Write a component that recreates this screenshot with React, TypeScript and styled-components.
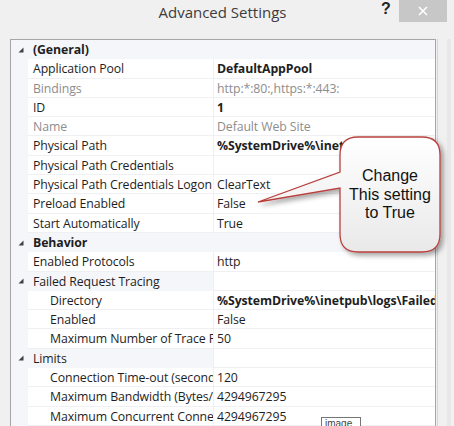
import React from "react";
import styled, { createGlobalStyle } from "styled-components";

const Global = createGlobalStyle`
  html, body { margin: 0; padding: 0; }
  body {
    width: 454px; height: 426px; overflow: hidden;
    background: #f0f0f0;
    font-family: "Open Sans", "Noto Sans", sans-serif;
  }
`;

const Window = styled.div`
  position: relative;
  width: 454px;
  height: 426px;
  overflow: hidden;
  background: #f0f0f0;
  display: flex;
  flex-direction: column;
`;

const TitleBar = styled.div`
  height: 39px;
  flex: none;
  display: flex;
  align-items: flex-start;
`;

const Title = styled.div`
  flex: 1;
  text-align: center;
  padding-top: 2px;
  padding-left: 74px;
  font-size: 15px;
  color: #3c3c3c;
  margin-right: 10px;
`;

const Help = styled.div`
  width: 16px;
  font-family: "Liberation Sans", Arial, sans-serif;
  font-weight: bold;
  font-size: 16px;
  color: #222;
  margin-right: 2px;
`;

const Close = styled.div`
  width: 48px;
  height: 22px;
  margin-right: 7px;
  background: #c7c7c7;
  display: flex;
  align-items: center;
  justify-content: center;
`;

const Body = styled.div`
  flex: 1;
  display: flex;
  padding-left: 10px;
`;

const Grid = styled.div`
  width: 424px;
  border: 1px solid #a6a6a6;
  border-bottom: none;
  background: #f5f6fa;
  display: flex;
  flex-direction: column;
`;

const Side = styled.div`
  flex: 1;
  margin-left: 1px;
  border-left: 1px solid #d6d6d6;
  background: linear-gradient(to right, #f0f0f0 0 9px, #e8e8e8 9px 13px, #f2f2f2 13px);
`;

const RowBox = styled.div`
  height: 19.3px;
  flex: none;
  display: grid;
  grid-template-columns: 17px 185px 1fr;
  font-size: 12.3px;
  letter-spacing: -0.1px;
  line-height: 19px;
  color: #1e1e1e;
`;

const Gutter = styled.div`
  display: flex;
  align-items: center;
  justify-content: flex-end;
  padding-right: 4px;
`;

const NameCell = styled.div<{ $indent?: boolean; $cat?: boolean; $bold?: boolean; $disabled?: boolean }>`
  background: ${(p) => (p.$cat ? "transparent" : "#ffffff")};
  border-bottom: 1px solid ${(p) => (p.$cat ? "transparent" : "#eff0f4")};
  padding-left: ${(p) => (p.$indent ? "22px" : "5px")};
  white-space: nowrap;
  overflow: hidden;
  font-weight: ${(p) => (p.$bold ? 700 : 400)};
  color: ${(p) => (p.$disabled ? "#8d8d8d" : "#1e1e1e")};
  box-sizing: border-box;
`;

const ValueCell = styled.div<{ $cat?: boolean; $bold?: boolean; $disabled?: boolean }>`
  background: ${(p) => (p.$cat ? "transparent" : "#ffffff")};
  border-left: 1px solid ${(p) => (p.$cat ? "transparent" : "#eff0f4")};
  border-bottom: 1px solid ${(p) => (p.$cat ? "transparent" : "#eff0f4")};
  padding-left: 3px;
  white-space: nowrap;
  overflow: hidden;
  font-weight: ${(p) => (p.$bold ? 700 : 400)};
  color: ${(p) => (p.$disabled ? "#8d8d8d" : "#1e1e1e")};
  box-sizing: border-box;
`;

const Expander = () => (
  <svg width="6" height="6" viewBox="0 0 6 6">
    <polygon points="5.5,0.5 5.5,5.5 0.5,5.5" fill="#404040" />
  </svg>
);

type RowProps = {
  name: string;
  value?: string;
  kind?: "cat" | "sub" | "prop" | "child";
  bold?: boolean;
  disabled?: boolean;
  boldName?: boolean;
};

const Row = ({ name, value, kind = "prop", bold, disabled, boldName }: RowProps) => {
  const cat = kind === "cat";
  const sub = kind === "sub";
  return (
    <RowBox>
      <Gutter>{cat || sub ? <Expander /> : null}</Gutter>
      <NameCell $cat={cat || sub} $indent={kind === "child"} $bold={boldName} $disabled={disabled}>
        {name}
      </NameCell>
      <ValueCell $cat={cat} $bold={bold} $disabled={disabled}>
        {value ?? ""}
      </ValueCell>
    </RowBox>
  );
};

const CalloutWrap = styled.div`
  position: absolute;
  left: 250px;
  top: 130px;
  width: 200px;
  height: 135px;
`;

const CalloutText = styled.div`
  position: absolute;
  left: 90px;
  top: 37px;
  width: 100px;
  text-align: center;
  font-family: "Liberation Sans", Arial, sans-serif;
  font-size: 16px;
  line-height: 18.5px;
  color: #111;
`;

const Tooltip = styled.div`
  position: absolute;
  left: 321px;
  top: 417px;
  width: 35px;
  height: 14px;
  border: 1px solid #767676;
  background: #fff;
  font-family: "Liberation Sans", Arial, sans-serif;
  font-size: 10px;
  line-height: 12px;
  color: #444;
  padding-left: 3px;
`;

const Callout = () => (
  <CalloutWrap>
    <svg width="200" height="135" viewBox="0 0 200 135">
      <defs>
        <linearGradient id="cg" x1="0" y1="0" x2="0" y2="1">
          <stop offset="0" stopColor="#ffffff" />
          <stop offset="1" stopColor="#e9e9e9" />
        </linearGradient>
        <filter id="cs" x="-20%" y="-20%" width="150%" height="150%">
          <feDropShadow dx="3" dy="3" stdDeviation="2.5" floodColor="#000" floodOpacity="0.35" />
        </filter>
      </defs>
      <path
        d="M108 7 H172 Q190 7 190 25 V104 Q190 122 172 122 H108 Q90 122 90 104 V58 L8 72 L90 42 V25 Q90 7 108 7 Z"
        fill="url(#cg)"
        stroke="#b8413e"
        strokeWidth="1.3"
        filter="url(#cs)"
      />
    </svg>
    <CalloutText>
      Change
      <br />
      This setting
      <br />
      to True
    </CalloutText>
  </CalloutWrap>
);

export default function App() {
  return (
    <>
      <Global />
      <Window>
        <TitleBar>
          <Title>Advanced Settings</Title>
          <Help>?</Help>
          <Close>
            <svg width="10" height="10" viewBox="0 0 10 10">
              <path d="M1 1 L9 9 M9 1 L1 9" stroke="#fff" strokeWidth="1.6" />
            </svg>
          </Close>
        </TitleBar>
        <Body>
          <Grid>
            <Row name="(General)" kind="cat" boldName />
            <Row name="Application Pool" value="DefaultAppPool" bold />
            <Row name="Bindings" value="http:*:80:,https:*:443:" disabled />
            <Row name="ID" value="1" bold />
            <Row name="Name" value="Default Web Site" disabled />
            <Row name="Physical Path" value="%SystemDrive%\inetpub\wwwroot" bold />
            <Row name="Physical Path Credentials" value="" />
            <Row name="Physical Path Credentials Logon Type" value="ClearText" />
            <Row name="Preload Enabled" value="False" />
            <Row name="Start Automatically" value="True" />
            <Row name="Behavior" kind="cat" boldName />
            <Row name="Enabled Protocols" value="http" />
            <Row name="Failed Request Tracing" kind="sub" value="" />
            <Row name="Directory" kind="child" value="%SystemDrive%\inetpub\logs\FailedReqLogFiles" bold />
            <Row name="Enabled" kind="child" value="False" />
            <Row name="Maximum Number of Trace Files" kind="child" value="50" />
            <Row name="Limits" kind="sub" value="" />
            <Row name="Connection Time-out (seconds)" kind="child" value="120" />
            <Row name="Maximum Bandwidth (Bytes/second)" kind="child" value="4294967295" />
            <Row name="Maximum Concurrent Connections" kind="child" value="4294967295" />
            <Row name="Queue Length" kind="child" value="1000" />
          </Grid>
          <Side />
        </Body>
        <Callout />
        <Tooltip>image</Tooltip>
      </Window>
    </>
  );
}
